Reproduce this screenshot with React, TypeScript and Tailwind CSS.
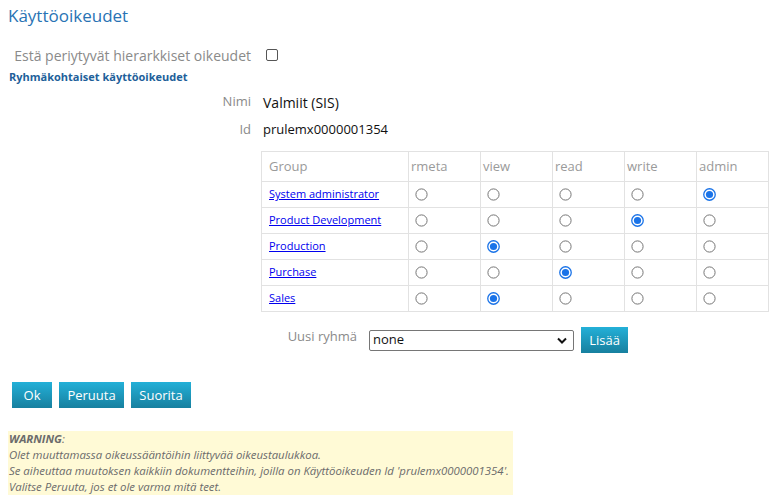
import React from "react";

const groups: { name: string; sel: number }[] = [
  { name: "System administrator", sel: 5 },
  { name: "Product Development", sel: 4 },
  { name: "Production", sel: 2 },
  { name: "Purchase", sel: 3 },
  { name: "Sales", sel: 2 },
];
const cols = ["rmeta", "view", "read", "write", "admin"];

function Radio({ on }: { on: boolean }) {
  return (
    <svg width="13" height="13" viewBox="0 0 13 13" className="block">
      {on ? (
        <>
          <circle cx="6.5" cy="6.5" r="5.75" fill="#fff" stroke="#1a73e8" strokeWidth="1.3" />
          <circle cx="6.5" cy="6.5" r="3.6" fill="#1a73e8" />
        </>
      ) : (
        <circle cx="6.5" cy="6.5" r="5.6" fill="#fff" stroke="#767676" strokeWidth="1" />
      )}
    </svg>
  );
}

const btn =
  "h-[26px] text-white text-[13px] text-center bg-gradient-to-b from-[#23b0d8] to-[#17809f] leading-[26px]";

export default function App() {
  return (
    <div className="w-[780px] h-[500px] bg-white relative overflow-hidden text-[#222]" style={{ fontFamily: '"Open Sans", sans-serif' }}>
      <div className="pt-[3px] pl-[8px] text-[17px] leading-[26px] text-[#2873b4]">Käyttöoikeudet</div>
      <div className="flex items-center mt-[17px] h-[18px]">
        <div className="w-[251px] text-right text-[14px] text-[#8a8a8a]">Estä periytyvät hierarkkiset oikeudet</div>
        <div className="ml-[15px] w-[12px] h-[12px] border border-[#555] rounded-[2px]" />
      </div>
      <div className="pl-[9px] mt-[5px] text-[11px] font-bold text-[#1e5f9a] leading-[16px]">Ryhmäkohtaiset käyttöoikeudet</div>
      <div className="flex items-center mt-[8px] h-[18px]">
        <div className="w-[251px] text-right text-[13px] text-[#8a8a8a]">Nimi</div>
        <div className="ml-[12px] text-[14px] text-[#111]">Valmiit (SIS)</div>
      </div>
      <div className="flex items-center mt-[10px] h-[18px]">
        <div className="w-[251px] text-right text-[13px] text-[#8a8a8a]">Id</div>
        <div className="ml-[12px] text-[13px] text-[#111]">prulemx0000001354</div>
      </div>
      <div className="pl-[261px] mt-[12px]">
        <table className="border-collapse text-[13px]">
          <thead>
            <tr className="h-[30px]">
              <th className="w-[147px] border border-[#e2e2e2] text-left font-normal text-[#9a9a9a] px-[7px]">Group</th>
              {cols.map((c) => (
                <th key={c} className="w-[72px] border border-[#e2e2e2] text-left font-normal text-[#9a9a9a] px-[2px]">{c}</th>
              ))}
            </tr>
          </thead>
          <tbody>
            {groups.map((g) => (
              <tr key={g.name} className="h-[26px]">
                <td className="border border-[#e2e2e2] px-[7px] text-[11px]">
                  <a href="#" className="text-[#0000ee] underline">{g.name}</a>
                </td>
                {cols.map((c, i) => (
                  <td key={c} className="border border-[#e2e2e2] pl-[6px]">
                    <Radio on={g.sel === i + 1} />
                  </td>
                ))}
              </tr>
            ))}
          </tbody>
        </table>
      </div>
      <div className="flex items-center mt-[17px] h-[22px]">
        <div className="w-[357px] text-right text-[13px] text-[#8a8a8a] self-start leading-[14px]">Uusi ryhmä</div>
        <div className="ml-[12px] w-[205px] h-[21px] border border-[#767676] rounded-[2px] flex items-center justify-between pl-[3px] pr-[6px] text-[13px] text-[#111]">
          <span>none</span>
          <svg width="10" height="7" viewBox="0 0 10 7"><path d="M1 1.5 L5 5.5 L9 1.5" fill="none" stroke="#111" strokeWidth="2" /></svg>
        </div>
        <button className={btn + " ml-[7px] h-[22px] leading-[22px] w-[47px]"}>Lisää</button>
      </div>
      <div className="flex gap-[7px] pl-[12px] mt-[31px]">
        <button className={btn + " w-[40px]"}>Ok</button>
        <button className={btn + " w-[65px]"}>Peruuta</button>
        <button className={btn + " w-[60px]"}>Suorita</button>
      </div>
      <div className="ml-[8px] mt-[23px] w-[505px] bg-[#fffad6] px-[1px] text-[11.4px] leading-[16px] italic text-[#6b6b6b] whitespace-nowrap">
        <div className="font-bold">WARNING<span className="font-normal">:</span></div>
        <div>Olet muuttamassa oikeussääntöihin liittyvää oikeustaulukkoa.</div>
        <div>Se aiheuttaa muutoksen kaikkiin dokumentteihin, joilla on Käyttöoikeuden Id 'prulemx0000001354'.</div>
        <div>Valitse Peruuta, jos et ole varma mitä teet.</div>
      </div>
    </div>
  );
}
